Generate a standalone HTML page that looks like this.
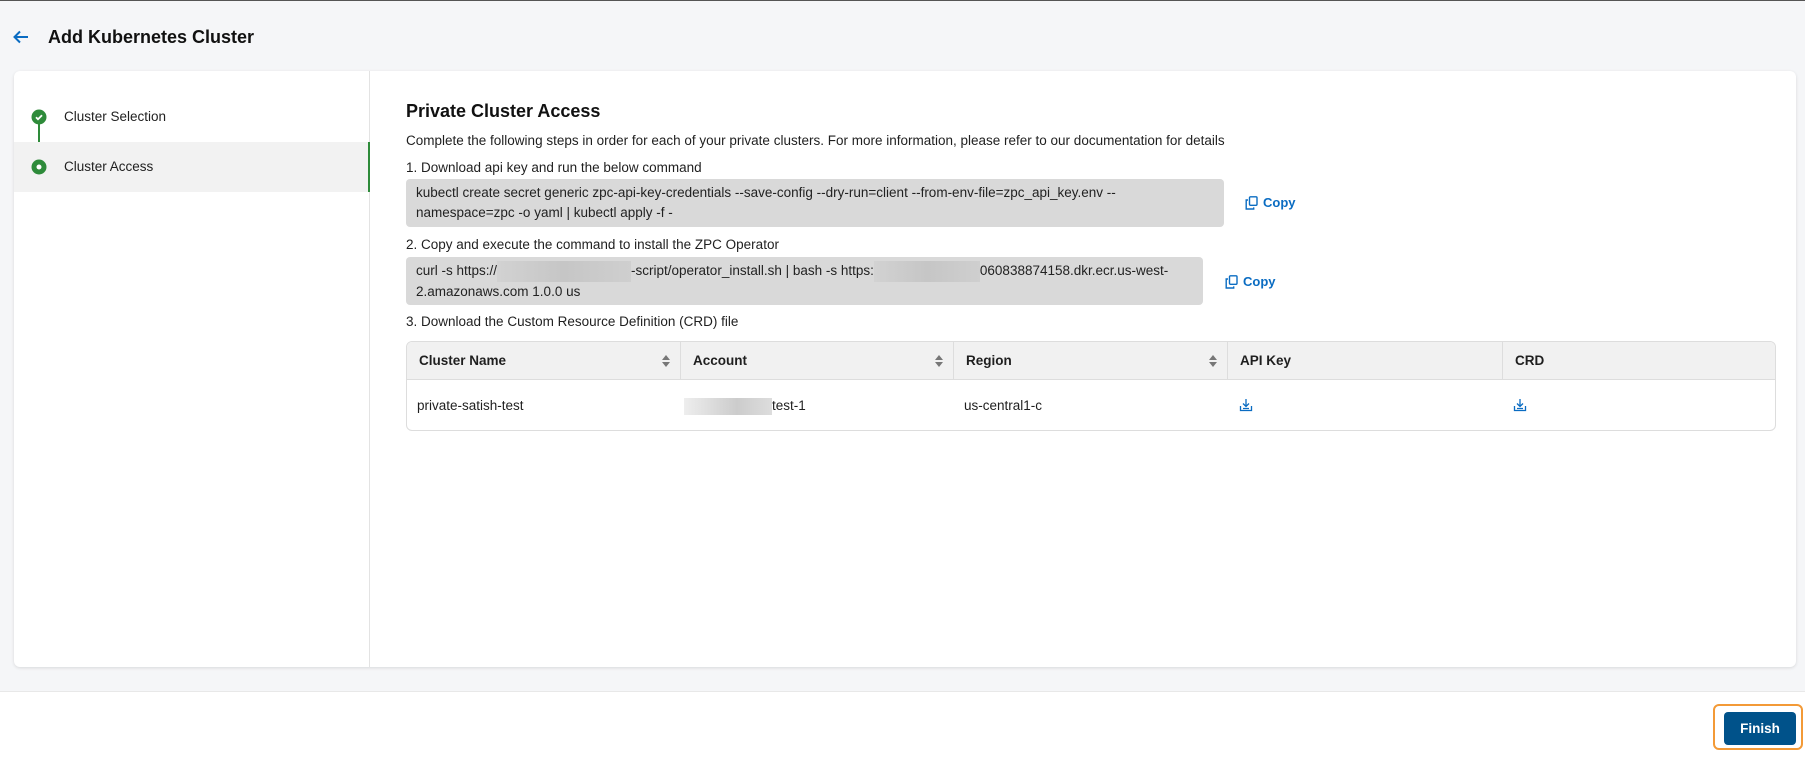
<!DOCTYPE html>
<html><head><meta charset="utf-8"><style>
*{box-sizing:border-box;margin:0;padding:0}
body{width:1805px;height:760px;background:#f5f6f8;font-family:"Liberation Sans",Arial,sans-serif;color:#1f1f1f;position:relative;overflow:hidden;border-top:1px solid #555}
.abs{position:absolute}
.title{left:48px;top:24px;font-size:18px;font-weight:bold;line-height:24px;color:#111}
.card{left:14px;top:70px;width:1782px;height:596px;background:#fff;border-radius:6px;box-shadow:0 1px 3px rgba(0,0,0,.12)}
.side{left:0;top:0;width:356px;height:596px;border-right:1px solid #e3e3e3}
.row{position:absolute;left:0;width:356px;font-size:13.5px;line-height:20px}
.t{font-size:13.5px;line-height:20px;white-space:nowrap}
.code{background:#d9d9d9;border-radius:4px;padding:4px 10px;font-size:13.5px;line-height:20px;color:#222}
.copy{color:#0a6cc2;font-size:13px;font-weight:bold;display:flex;align-items:center;gap:5px}
.blur{display:inline-block;background:linear-gradient(90deg,#d2d2d2,#c6c6c6,#cfcfcf);vertical-align:middle}
.tbl{left:392px;top:270px;width:1370px;height:90px;border:1px solid #ddd;border-radius:6px;overflow:hidden}
.th{position:absolute;top:0;height:38px;background:#f1f1f1;border-bottom:1px solid #ddd;font-size:13.5px;font-weight:bold;line-height:38px;padding-left:12px}
.td{position:absolute;top:39px;height:50px;font-size:13.5px;line-height:50px;padding-left:10px}
.sort{position:absolute;right:10px;top:13px}
</style></head><body>
<svg class="abs" style="left:13px;top:29px" width="16" height="14" viewBox="0 0 16 14"><path d="M15 7H2M7 1.5L1.5 7 7 12.5" fill="none" stroke="#0a6cc2" stroke-width="2"/></svg>
<div class="abs title">Add Kubernetes Cluster</div>
<div class="abs card">
 <div class="abs side">
  <div class="abs" style="left:24px;top:45px;width:2px;height:52px;background:#2e8b3a"></div>
  <div class="row" style="top:36px;height:20px">
   <svg class="abs" style="left:17px;top:2px" width="16" height="16" viewBox="0 0 16 16"><circle cx="8" cy="8" r="7.5" fill="#2e8b3a"/><path d="M5 8.2l2 2 4-4" fill="none" stroke="#fff" stroke-width="1.8"/></svg>
   <span class="abs" style="left:50px">Cluster Selection</span></div>
  <div class="row" style="top:71px;height:50px;background:#f2f2f2;border-right:2px solid #2e8b3a">
   <svg class="abs" style="left:17px;top:17px" width="16" height="16" viewBox="0 0 16 16"><circle cx="8" cy="8" r="7.5" fill="#2e8b3a"/><circle cx="8" cy="8" r="2.5" fill="#fff"/></svg>
   <span class="abs" style="left:50px;top:15px">Cluster Access</span></div>
 </div>
 <div class="abs" style="left:392px;top:28px;font-size:18px;font-weight:bold;line-height:24px;color:#111">Private Cluster Access</div>
 <div class="abs t" style="left:392px;top:60px">Complete the following steps in order for each of your private clusters. For more information, please refer to our documentation for details</div>
 <div class="abs t" style="left:392px;top:87px">1. Download api key and run the below command</div>
 <div class="abs code" style="left:392px;top:108px;width:818px;height:48px">kubectl create secret generic zpc-api-key-credentials --save-config --dry-run=client --from-env-file=zpc_api_key.env --<br>namespace=zpc -o yaml | kubectl apply -f -</div>
 <div class="abs copy" style="left:1231px;top:124px"><svg width="13" height="14" viewBox="0 0 13 14"><rect x="4.5" y="0.8" width="7.5" height="8.5" rx="1" fill="none" stroke="#0a6cc2" stroke-width="1.4"/><path d="M3 4H1.2v9h7.5v-1.6" fill="none" stroke="#0a6cc2" stroke-width="1.4"/></svg>Copy</div>
 <div class="abs t" style="left:392px;top:164px">2. Copy and execute the command to install the ZPC Operator</div>
 <div class="abs code" style="left:392px;top:186px;width:797px;height:48px;white-space:nowrap">curl -s https://<span class="blur" style="width:134px;height:21px"></span>-script/operator_install.sh | bash -s https:<span class="blur" style="width:106px;height:21px"></span>060838874158.dkr.ecr.us-west-<br>2.amazonaws.com 1.0.0 us</div>
 <div class="abs copy" style="left:1211px;top:203px"><svg width="13" height="14" viewBox="0 0 13 14"><rect x="4.5" y="0.8" width="7.5" height="8.5" rx="1" fill="none" stroke="#0a6cc2" stroke-width="1.4"/><path d="M3 4H1.2v9h7.5v-1.6" fill="none" stroke="#0a6cc2" stroke-width="1.4"/></svg>Copy</div>
 <div class="abs t" style="left:392px;top:241px">3. Download the Custom Resource Definition (CRD) file</div>
 <div class="abs tbl">
  <div class="th" style="left:0;width:274px;border-right:1px solid #ddd">Cluster Name<svg class="sort" width="8" height="12" viewBox="0 0 8 12"><path d="M4 0L8 5H0zM4 12L0 7h8z" fill="#777"/></svg></div>
  <div class="th" style="left:274px;width:273px;border-right:1px solid #ddd">Account<svg class="sort" width="8" height="12" viewBox="0 0 8 12"><path d="M4 0L8 5H0zM4 12L0 7h8z" fill="#777"/></svg></div>
  <div class="th" style="left:547px;width:274px;border-right:1px solid #ddd">Region<svg class="sort" width="8" height="12" viewBox="0 0 8 12"><path d="M4 0L8 5H0zM4 12L0 7h8z" fill="#777"/></svg></div>
  <div class="th" style="left:821px;width:275px;border-right:1px solid #ddd">API Key</div>
  <div class="th" style="left:1096px;width:274px">CRD</div>
  <div class="td" style="left:0">private-satish-test</div>
  <div class="td" style="left:277px;padding-left:0"><span class="blur" style="width:88px;height:17px;background:linear-gradient(90deg,#eee,#ccc 60%,#ddd)"></span>test-1</div>
  <div class="td" style="left:547px">us-central1-c</div>
  <svg class="abs" style="left:832px;top:56px" width="14" height="14" viewBox="0 0 14 14"><path d="M7 1v7M4 5.5L7 8.5 10 5.5M1.5 8v4.5h11V8M4 10.5h6" fill="none" stroke="#0a6cc2" stroke-width="1.3"/></svg>
  <svg class="abs" style="left:1106px;top:56px" width="14" height="14" viewBox="0 0 14 14"><path d="M7 1v7M4 5.5L7 8.5 10 5.5M1.5 8v4.5h11V8M4 10.5h6" fill="none" stroke="#0a6cc2" stroke-width="1.3"/></svg>
 </div>
</div>
<div class="abs" style="left:0;top:690px;width:1805px;height:70px;background:#fff;border-top:1px solid #e8e8e8"></div>
<div class="abs" style="left:1713px;top:703px;width:90px;height:46px;border:2px solid #f39a37;border-radius:6px"></div>
<div class="abs" style="left:1724px;top:711px;width:72px;height:33px;background:#00528a;border-radius:4px;color:#fff;font-size:13.5px;font-weight:bold;line-height:33px;text-align:center">Finish</div>
</body></html>
